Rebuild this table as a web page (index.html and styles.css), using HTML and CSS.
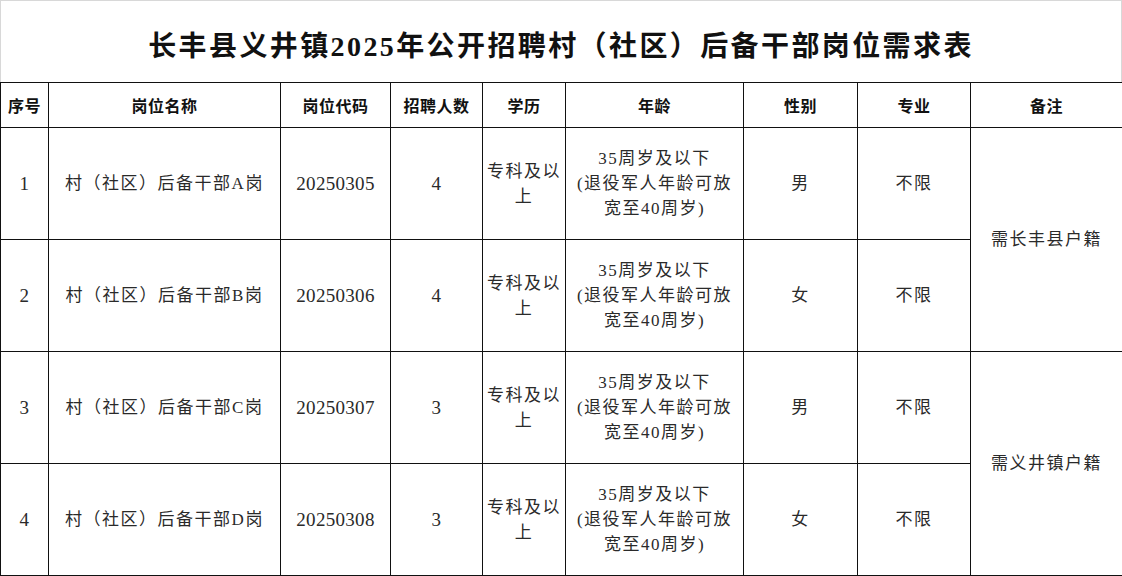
FILE: index.html
```html
<!DOCTYPE html>
<html lang="zh-CN">
<head>
<meta charset="utf-8">
<title>岗位需求表</title>
<link rel="stylesheet" href="styles.css">
</head>
<body>
<div class="sheet">
  <div class="title">长丰县义井镇2025年公开招聘村（社区）后备干部岗位需求表</div>
  <table class="grid">
    <colgroup>
      <col class="c1"><col class="c2"><col class="c3"><col class="c4"><col class="c5"><col class="c6"><col class="c7"><col class="c8"><col class="c9">
    </colgroup>
    <thead>
      <tr>
        <th>序号</th><th>岗位名称</th><th>岗位代码</th><th>招聘人数</th><th>学历</th><th>年龄</th><th>性别</th><th>专业</th><th>备注</th>
      </tr>
    </thead>
    <tbody>
      <tr>
        <td class="num">1</td><td>村（社区）后备干部A岗</td><td class="num">20250305</td><td class="num">4</td>
        <td class="edu">专科及以上</td><td>35周岁及以下<br>(退役军人年龄可放<br>宽至40周岁)</td><td>男</td><td>不限</td>
        <td rowspan="2">需长丰县户籍</td>
      </tr>
      <tr>
        <td class="num">2</td><td>村（社区）后备干部B岗</td><td class="num">20250306</td><td class="num">4</td>
        <td class="edu">专科及以上</td><td>35周岁及以下<br>(退役军人年龄可放<br>宽至40周岁)</td><td>女</td><td>不限</td>
      </tr>
      <tr>
        <td class="num">3</td><td>村（社区）后备干部C岗</td><td class="num">20250307</td><td class="num">3</td>
        <td class="edu">专科及以上</td><td>35周岁及以下<br>(退役军人年龄可放<br>宽至40周岁)</td><td>男</td><td>不限</td>
        <td rowspan="2">需义井镇户籍</td>
      </tr>
      <tr>
        <td class="num">4</td><td>村（社区）后备干部D岗</td><td class="num">20250308</td><td class="num">3</td>
        <td class="edu">专科及以上</td><td>35周岁及以下<br>(退役军人年龄可放<br>宽至40周岁)</td><td>女</td><td>不限</td>
      </tr>
    </tbody>
  </table>
</div>
</body>
</html>
```
FILE: styles.css
```css
html, body {
  margin: 0;
  padding: 0;
  background: #fff;
}
body {
  font-family: "Liberation Serif", "Noto Sans CJK SC", serif;
  color: #222;
}
.sheet {
  width: 1122px;
}
.title {
  box-sizing: border-box;
  height: 82px;
  border-top: 1px solid #d8d8d8;
  border-left: 1px solid #d8d8d8;
  border-right: 1px solid #d8d8d8;
  display: flex;
  align-items: center;
  justify-content: center;
  font-size: 28px;
  font-weight: bold;
  letter-spacing: 2.4px;
  color: #111;
  padding-top: 4px;
}
.grid {
  width: 1122px;
  border-collapse: collapse;
  table-layout: fixed;
}
.c1 { width: 48px; }
.c2 { width: 232px; }
.c3 { width: 110px; }
.c4 { width: 92px; }
.c5 { width: 83px; }
.c6 { width: 178px; }
.c7 { width: 114px; }
.c8 { width: 113px; }
.c9 { width: 152px; }
.grid th,
.grid td {
  border: 1.5px solid #111;
  text-align: center;
  vertical-align: middle;
  padding: 0 3px;
}
.grid th {
  height: 44px;
  font-size: 16px;
  font-weight: bold;
  color: #111;
  letter-spacing: 0.5px;
}
.grid td {
  height: 111px;
  font-size: 17px;
  line-height: 25px;
  letter-spacing: 1.5px;
  color: #2a2a2a;
}
.grid td.num {
  font-size: 19px;
  letter-spacing: 0.3px;
}
.grid td.edu {
  padding: 0 2px;
}
```
